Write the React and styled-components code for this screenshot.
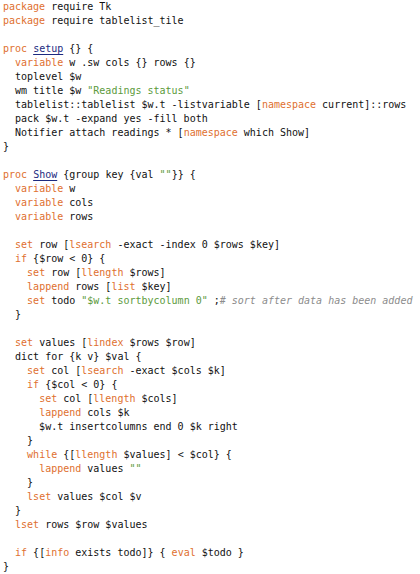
import React from "react";
import styled, { createGlobalStyle } from "styled-components";

const Global = createGlobalStyle`
  html, body { margin: 0; padding: 0; background: #ffffff; }
`;

const Listing = styled.pre`
  margin: 0;
  padding: 0 0 0 3px;
  font-family: "DejaVu Sans Mono", "Liberation Mono", monospace;
  font-size: 10px;
  line-height: 14px;
  color: #111111;
  background: #ffffff;
  white-space: pre;
`;

const Line = styled.div`
  height: 14px;
`;

const Kw = styled.span`
  color: #e0702f;
`;

const Str = styled.span`
  color: #5c9a3c;
`;

const Cmt = styled.span`
  color: #8c8c8c;
  font-style: italic;
`;

const Name = styled.span`
  color: #1c2a80;
  text-decoration: underline;
  text-underline-offset: 2px;
`;

const K = (t) => ["k", t];
const S = (t) => ["s", t];
const C = (t) => ["c", t];
const N = (t) => ["n", t];

const lines = [
  [K("package"), " require Tk"],
  [K("package"), " require tablelist_tile"],
  [],
  [K("proc"), " ", N("setup"), " {} {"],
  ["  ", K("variable"), " w .sw cols {} rows {}"],
  ["  toplevel $w"],
  ["  wm title $w ", S('"Readings status"')],
  ["  tablelist::tablelist $w.t -listvariable [", K("namespace"), " current]::rows"],
  ["  pack $w.t -expand yes -fill both"],
  ["  Notifier attach readings * [", K("namespace"), " which Show]"],
  ["}"],
  [],
  [K("proc"), " ", N("Show"), " {group key {val ", S('""'), "}} {"],
  ["  ", K("variable"), " w"],
  ["  ", K("variable"), " cols"],
  ["  ", K("variable"), " rows"],
  [],
  ["  ", K("set"), " row [", K("lsearch"), " -exact -index 0 $rows $key]"],
  ["  ", K("if"), " {$row < 0} {"],
  ["    ", K("set"), " row [", K("llength"), " $rows]"],
  ["    ", K("lappend"), " rows [", K("list"), " $key]"],
  ["    ", K("set"), " todo ", S('"$w.t sortbycolumn 0"'), " ;", C("# sort after data has been added")],
  ["  }"],
  [],
  ["  ", K("set"), " values [", K("lindex"), " $rows $row]"],
  ["  dict for {k v} $val {"],
  ["    ", K("set"), " col [", K("lsearch"), " -exact $cols $k]"],
  ["    ", K("if"), " {$col < 0} {"],
  ["      ", K("set"), " col [", K("llength"), " $cols]"],
  ["      ", K("lappend"), " cols $k"],
  ["      $w.t insertcolumns end 0 $k right"],
  ["    }"],
  ["    ", K("while"), " {[", K("llength"), " $values] < $col} {"],
  ["      ", K("lappend"), " values ", S('""')],
  ["    }"],
  ["    ", K("lset"), " values $col $v"],
  ["  }"],
  ["  ", K("lset"), " rows $row $values"],
  [],
  ["  ", K("if"), " {[", K("info"), " exists todo]} { ", K("eval"), " $todo }"],
  ["}"],
];

function Token({ tok }) {
  if (typeof tok === "string") return tok;
  const [type, text] = tok;
  if (type === "k") return <Kw>{text}</Kw>;
  if (type === "s") return <Str>{text}</Str>;
  if (type === "c") return <Cmt>{text}</Cmt>;
  return <Name>{text}</Name>;
}

export default function App() {
  return (
    <>
      <Global />
      <Listing>
        {lines.map((toks, i) => (
          <Line key={i}>
            {toks.map((t, j) => (
              <Token key={j} tok={t} />
            ))}
          </Line>
        ))}
      </Listing>
    </>
  );
}
